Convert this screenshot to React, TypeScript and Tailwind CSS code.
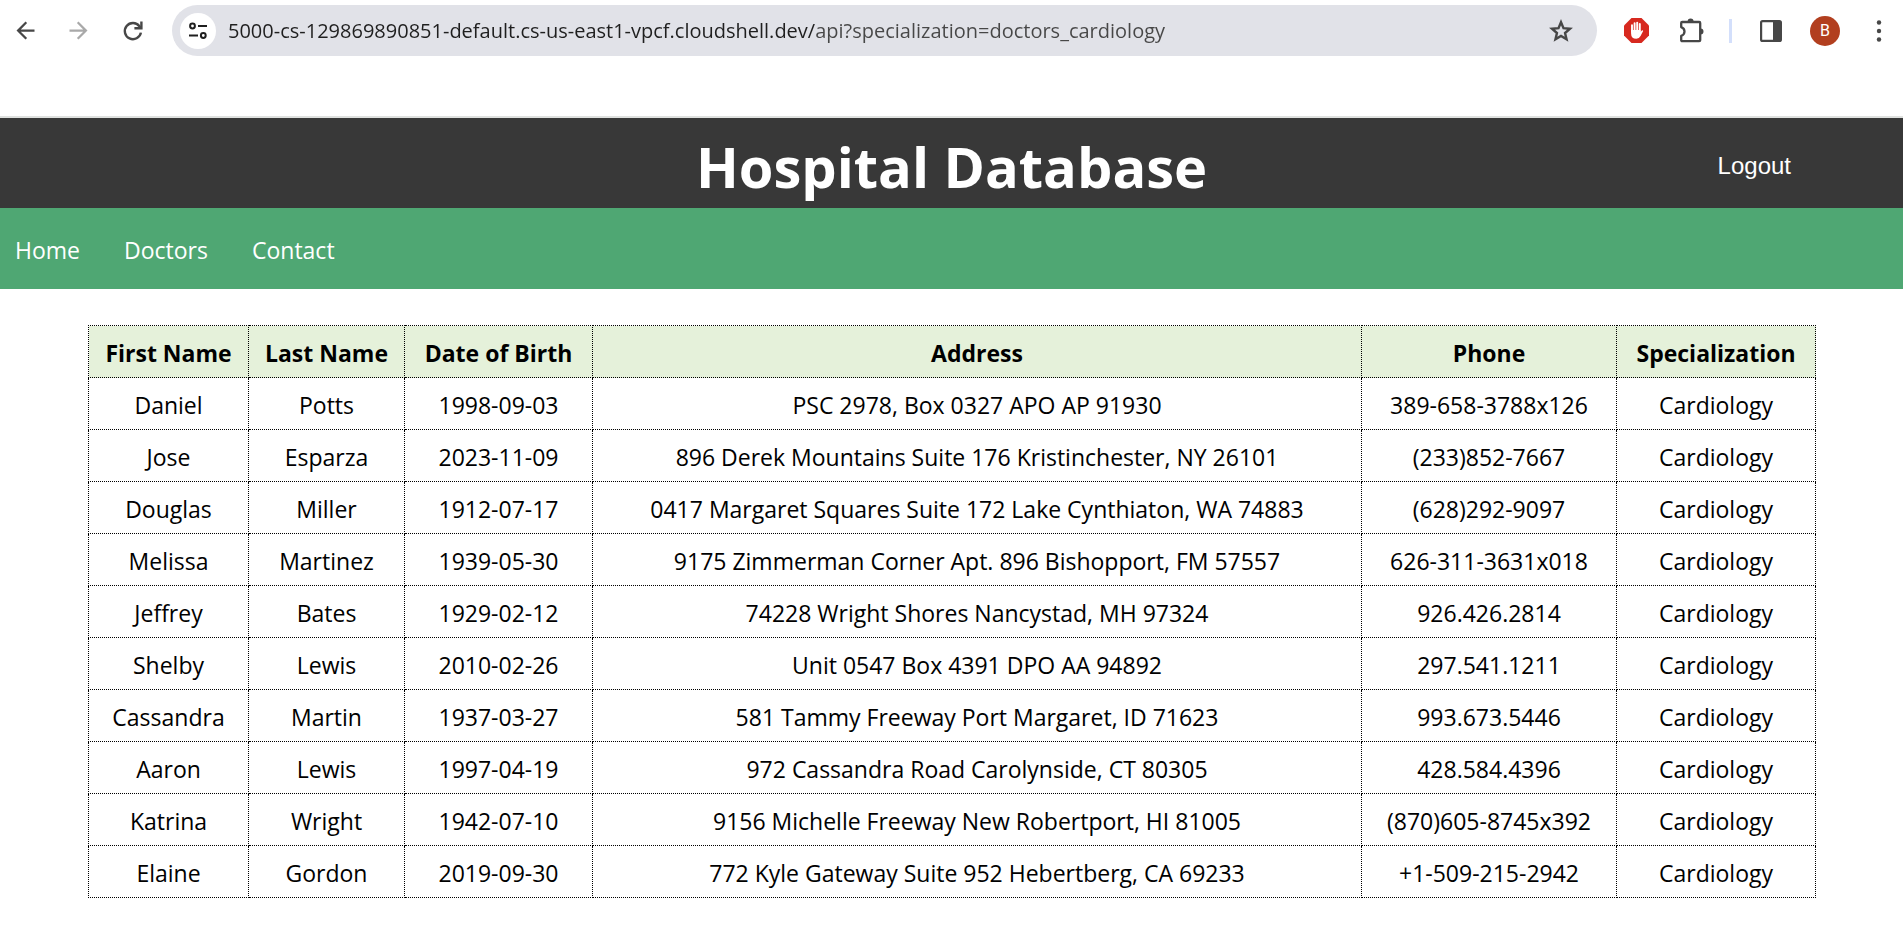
import React from "react";

const sans = "font-['Open_Sans','Noto_Sans',sans-serif]";

const columns = ["First Name", "Last Name", "Date of Birth", "Address", "Phone", "Specialization"];

const doctors = [
  ["Daniel", "Potts", "1998-09-03", "PSC 2978, Box 0327 APO AP 91930", "389-658-3788x126"],
  ["Jose", "Esparza", "2023-11-09", "896 Derek Mountains Suite 176 Kristinchester, NY 26101", "(233)852-7667"],
  ["Douglas", "Miller", "1912-07-17", "0417 Margaret Squares Suite 172 Lake Cynthiaton, WA 74883", "(628)292-9097"],
  ["Melissa", "Martinez", "1939-05-30", "9175 Zimmerman Corner Apt. 896 Bishopport, FM 57557", "626-311-3631x018"],
  ["Jeffrey", "Bates", "1929-02-12", "74228 Wright Shores Nancystad, MH 97324", "926.426.2814"],
  ["Shelby", "Lewis", "2010-02-26", "Unit 0547 Box 4391 DPO AA 94892", "297.541.1211"],
  ["Cassandra", "Martin", "1937-03-27", "581 Tammy Freeway Port Margaret, ID 71623", "993.673.5446"],
  ["Aaron", "Lewis", "1997-04-19", "972 Cassandra Road Carolynside, CT 80305", "428.584.4396"],
  ["Katrina", "Wright", "1942-07-10", "9156 Michelle Freeway New Robertport, HI 81005", "(870)605-8745x392"],
  ["Elaine", "Gordon", "2019-09-30", "772 Kyle Gateway Suite 952 Hebertberg, CA 69233", "+1-509-215-2942"],
].map((row) => [...row, "Cardiology"]);

const iconButton = "flex shrink-0 items-center justify-center";

function BrowserBar() {
  return (
    <div className="flex h-[116px] items-start bg-white pt-[5px] text-[#474747]">
      <div className="flex h-[51px] w-full items-center">
        <button type="button" aria-label="Back" className={`${iconButton} w-[50px]`}>
          <svg width="27" height="27" viewBox="0 0 24 24" fill="currentColor">
            <path d="M20 11H7.83l5.59-5.59L12 4l-8 8 8 8 1.41-1.41L7.83 13H20z" />
          </svg>
        </button>
        <button type="button" aria-label="Forward" disabled className={`${iconButton} w-[56px] text-[#a9a9a9]`}>
          <svg width="27" height="27" viewBox="0 0 24 24" fill="currentColor">
            <path d="M4 13h12.17l-5.59 5.59L12 20l8-8-8-8-1.41 1.41L16.17 11H4z" />
          </svg>
        </button>
        <button type="button" aria-label="Reload" className={`${iconButton} w-[54px]`}>
          <svg width="24" height="24" viewBox="0 0 24 24" fill="none" stroke="currentColor" strokeWidth="2.4">
            <path d="M19.9 13.6A8.1 8.1 0 1 1 18.4 7.2L20 9" />
            <path d="M20.4 2.600V9.200H13.400" />
          </svg>
        </button>
        <div className="ml-3 flex h-full min-w-0 flex-1 items-center rounded-full bg-[#e1e2e8] pr-6 pl-2">
          <button type="button" aria-label="Site information" className={`${iconButton} size-9 rounded-full bg-white text-[#1f1f1f]`}>
            <svg width="18" height="18" viewBox="0 0 18 18" fill="none" stroke="currentColor" strokeWidth="2">
              <circle cx="3.5" cy="4" r="2.4" />
              <path d="M9 4h9M0 13.5h9" />
              <circle cx="14.3" cy="13.5" r="2.4" />
            </svg>
          </button>
          <input
            aria-label="Address"
            defaultValue="5000-cs-129869890851-default.cs-us-east1-vpcf.cloudshell.dev/api?specialization=doctors_cardiology"
            className={`ml-3 min-w-0 flex-1 bg-[linear-gradient(to_right,#1f1f1f_587px,#474747_587px)] bg-clip-text text-xl leading-8 text-transparent outline-none ${sans}`}
          />
          <button type="button" aria-label="Bookmark this page" className={iconButton}>
            <svg width="24" height="24" viewBox="0 0 24 24" fill="none" stroke="currentColor" strokeWidth="2.4">
              <path d="M12 3.2l2.5 6 6.5.55-4.95 4.25 1.5 6.35L12 17l-5.55 3.35 1.5-6.35L3 9.75l6.5-.55z" />
            </svg>
          </button>
        </div>
        <button type="button" aria-label="Ad blocker" className={`${iconButton} ml-[27px]`}>
          <svg width="25" height="25" viewBox="0 0 25 25">
            <path d="M7.500 0h10L25 7.500v10L17.500 25h-10L0 17.500V7.500z" fill="#d7291f" />
            <g fill="none" stroke="#fff" strokeWidth="1.900" strokeLinecap="round">
              <path d="M8 13V7.200M10.600 12V5.200M13.200 12V4.600M15.800 12V6" />
              <path d="M7.050 12h9.700v1.800l1.100-1.300q1.200-.7 1.300.4l-2.600 5.200q-1.300 2.700-4.200 2.700-5.300 0-5.300-5.500z" fill="#fff" stroke="none" />
            </g>
          </svg>
        </button>
        <button type="button" aria-label="Extensions" className={`${iconButton} ml-[30px]`}>
          <svg width="26" height="25" viewBox="0 0 26 25" fill="none" stroke="currentColor" strokeWidth="2.300">
            <path d="M3.200 4h17a1 1 0 0 1 1 1v17.200a1 1 0 0 1-1 1h-17a1 1 0 0 1-1-1v-4.300c4.400-1.600 4.400-7.200 0-8.800V5a1 1 0 0 1 1-1z" strokeLinejoin="round" />
            <path d="M8.600 3.500a3 3 0 0 1 6 0zM21.500 10.600a3 3 0 0 1 0 6z" fill="currentColor" stroke="none" />
          </svg>
        </button>
        <span className="ml-6 h-6 w-[3px] bg-[#d3dffb]" />
        <button type="button" aria-label="Side panel" className={`${iconButton} ml-7`}>
          <svg width="22" height="22" viewBox="0 0 22 22">
            <rect x="1.100" y="1.100" width="19.800" height="19.800" rx="1.500" fill="none" stroke="currentColor" strokeWidth="2.200" />
            <path d="M13 1h8v20h-8z" fill="currentColor" />
          </svg>
        </button>
        <button type="button" aria-label="Profile" className={`${iconButton} ml-7 size-[30px] rounded-full bg-[#b23f1f] font-[Roboto,sans-serif] text-base text-white`}>
          B
        </button>
        <button type="button" aria-label="Menu" className={`${iconButton} mr-[21px] ml-9`}>
          <svg width="6" height="22" viewBox="0 0 6 22" fill="currentColor">
            <circle cx="3" cy="2.500" r="2.200" />
            <circle cx="3" cy="11" r="2.200" />
            <circle cx="3" cy="19.500" r="2.200" />
          </svg>
        </button>
      </div>
    </div>
  );
}

export default function App() {
  return (
    <div className={`min-h-screen bg-white text-black ${sans}`}>
      <BrowserBar />
      <header className="grid h-[92px] grid-cols-[1fr_auto_1fr] items-center border-t-2 border-[#dfe1df] bg-[#383838] pt-1.5 text-white">
        <h1 className="col-start-2 text-[56px] leading-none font-bold">Hospital Database</h1>
        <a href="#logout" className="mr-28 justify-self-end font-['Liberation_Sans',sans-serif] text-2xl">
          Logout
        </a>
      </header>
      <nav className="flex h-[81px] items-center gap-11 bg-[#4fa773] px-[15px] pt-0.5 text-[23px] leading-8 text-white">
        <a href="#home">Home</a>
        <a href="#doctors">Doctors</a>
        <a href="#contact">Contact</a>
      </nav>
      <main className="py-9 pr-[87px] pl-[88px]">
        <table className="w-full table-fixed border-collapse text-center text-[23px] leading-8">
          <colgroup>
            <col className="w-[160px]" />
            <col className="w-[156px]" />
            <col className="w-[188px]" />
            <col />
            <col className="w-[255px]" />
            <col className="w-[199px]" />
          </colgroup>
          <thead>
            <tr className="h-[52px] bg-[#e5f1da]">
              {columns.map((name) => (
                <th key={name} className="border border-dotted border-black pt-0.5 font-bold">{name}</th>
              ))}
            </tr>
          </thead>
          <tbody>
            {doctors.map((row) => (
              <tr key={row[4]} className="h-[52px]">
                {row.map((cell, i) => (
                  <td key={i} className="border border-dotted border-black pt-0.5">{cell}</td>
                ))}
              </tr>
            ))}
          </tbody>
        </table>
      </main>
    </div>
  );
}
